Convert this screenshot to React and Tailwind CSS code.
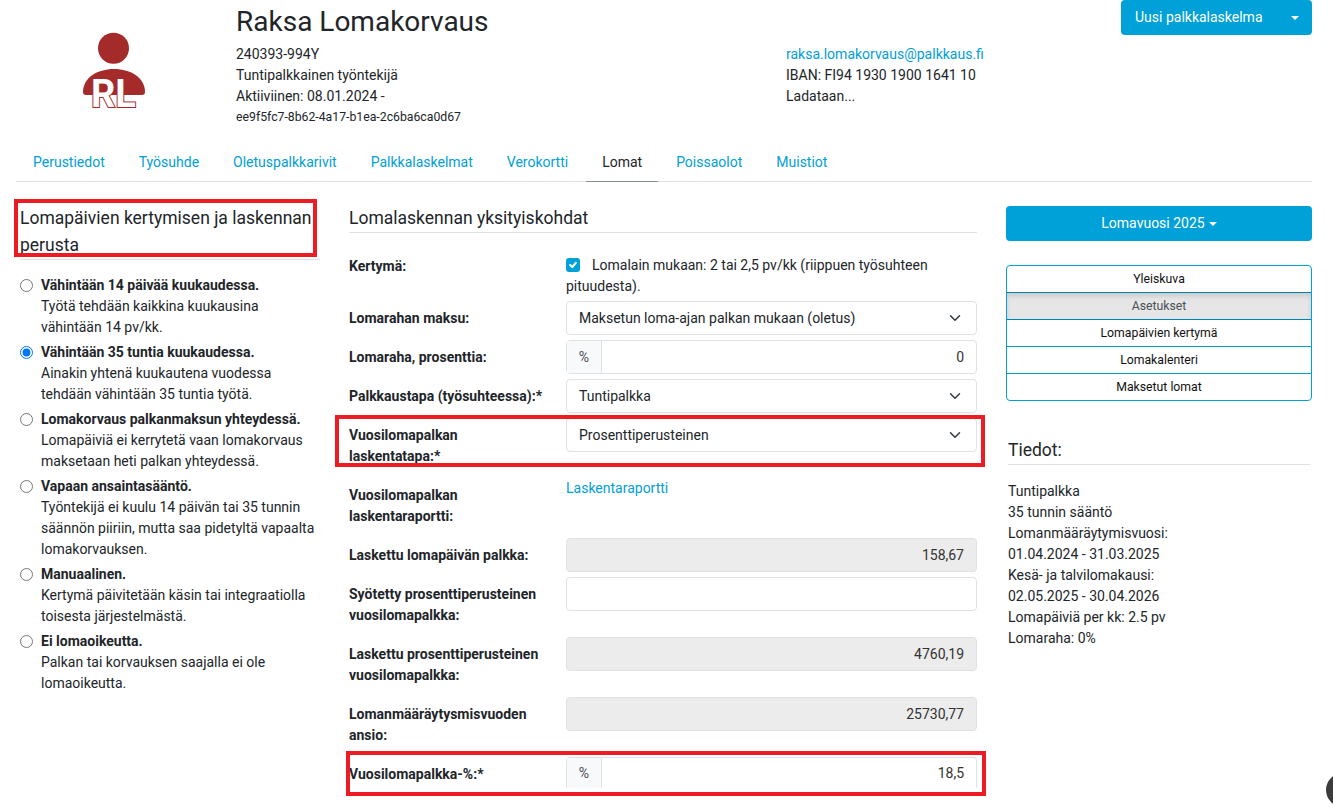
import React from "react";

const tabs = ["Perustiedot", "Työsuhde", "Oletuspalkkarivit", "Palkkalaskelmat", "Verokortti", "Lomat", "Poissaolot", "Muistiot"];

const options = [
  { t: "Vähintään 14 päivää kuukaudessa.", d: ["Työtä tehdään kaikkina kuukausina", "vähintään 14 pv/kk."] },
  { t: "Vähintään 35 tuntia kuukaudessa.", d: ["Ainakin yhtenä kuukautena vuodessa", "tehdään vähintään 35 tuntia työtä."], on: true },
  { t: "Lomakorvaus palkanmaksun yhteydessä.", d: ["Lomapäiviä ei kerrytetä vaan lomakorvaus", "maksetaan heti palkan yhteydessä."] },
  { t: "Vapaan ansaintasääntö.", d: ["Työntekijä ei kuulu 14 päivän tai 35 tunnin", "säännön piiriin, mutta saa pidetyltä vapaalta", "lomakorvauksen."] },
  { t: "Manuaalinen.", d: ["Kertymä päivitetään käsin tai integraatiolla", "toisesta järjestelmästä."] },
  { t: "Ei lomaoikeutta.", d: ["Palkan tai korvauksen saajalla ei ole", "lomaoikeutta."] },
];

const info = [
  "Tuntipalkka",
  "35 tunnin sääntö",
  "Lomanmääräytymisvuosi:",
  "01.04.2024 - 31.03.2025",
  "Kesä- ja talvilomakausi:",
  "02.05.2025 - 30.04.2026",
  "Lomapäiviä per kk: 2.5 pv",
  "Lomaraha: 0%",
];

function Caret() {
  return <span className="inline-block w-0 h-0 border-x-[4px] border-x-transparent border-t-[4px] border-t-white" />;
}

function Chevron() {
  return (
    <svg width="16" height="16" viewBox="0 0 16 16" fill="none" stroke="#343a40" strokeWidth="2" strokeLinecap="round" strokeLinejoin="round" className="w-[16px] h-[12px] shrink-0">
      <path d="M2 5l6 6 6-6" />
    </svg>
  );
}

function Row({ label, children, className = "" }) {
  return (
    <div className={`flex mb-[5px] ${className}`}>
      <div className="w-[217px] shrink-0 pt-[7px] pb-[6px] pr-4 font-bold">{label}</div>
      <div className="flex-1 min-w-0">{children}</div>
    </div>
  );
}

function Select({ value }) {
  return (
    <div className="h-[34px] flex items-center justify-between pl-[12px] pr-[13px] border border-[#dee2e6] rounded bg-white">
      <span>{value}</span>
      <Chevron />
    </div>
  );
}

function Percent({ value, cut }) {
  return (
    <div className={`flex border border-[#dee2e6] rounded bg-white ${cut ? "h-[31px] border-b-0 rounded-b-none" : "h-[34px]"}`}>
      <div className="w-[35px] bg-[#f8f9fa] border-r border-[#dee2e6] flex items-center justify-center text-[#495057]">%</div>
      <div className="flex-1 flex items-center justify-end pr-[12px] text-[#333333]">{value}</div>
    </div>
  );
}

function Disabled({ value }) {
  return (
    <div className="h-[34px] flex items-center justify-end pr-[12px] border border-[#dee2e6] rounded bg-[#ececec] text-[#333333]">{value}</div>
  );
}

export default function App() {
  return (
    <div className="relative h-[809px] overflow-hidden bg-white text-[#212529] text-[14px] leading-[21px] font-[Roboto,sans-serif]">
      {/* header */}
      <div className="flex h-[143px]">
        <svg width="236" height="143" viewBox="0 0 236 143" className="shrink-0 w-[236px] h-[143px]">
          <circle cx="113.5" cy="48.3" r="15.5" fill="#a52a2a" />
          <path d="M83 92C83 78 97 69 114 69C131 69 145 78 145 92Q145 95 142 95H86Q83 95 83 92Z" fill="#a52a2a" />
          <text x="91" y="106.5" fontFamily="Roboto, sans-serif" fontWeight="700" fontSize="38" fill="#ffffff" stroke="#a52a2a" strokeWidth="2" paintOrder="stroke">RL</text>
        </svg>
        <div className="w-[550px] shrink-0">
          <h1 className="text-[28px] leading-[34px] h-[44px] pt-[5px]">Raksa Lomakorvaus</h1>
          <div>240393-994Y</div>
          <div>Tuntipalkkainen työntekijä</div>
          <div>Aktiiviinen: 08.01.2024 -</div>
          <div className="text-[12.25px]">ee9f5fc7-8b62-4a17-b1ea-2c6ba6ca0d67</div>
        </div>
        <div className="flex-1 pt-[44px]">
          <div className="text-[#00a0d8]">raksa.lomakorvaus@palkkaus.fi</div>
          <div>IBAN: FI94 1930 1900 1641 10</div>
          <div>Ladataan...</div>
        </div>
        <div className="w-[191px] h-[35px] mr-[21px] flex items-center justify-between bg-[#00a0d8] text-white rounded pl-[14px] pr-[13px]">
          <span>Uusi palkkalaskelma</span>
          <Caret />
        </div>
      </div>

      {/* tabs */}
      <div className="flex ml-[16px] mr-[21px] border-b border-[#dee2e6] h-[39px]">
        {tabs.map((t) => (
          <div
            key={t}
            className={`h-[39px] mx-px px-[16px] pt-[9px] ${t === "Lomat" ? "text-[#212529] border-b border-[#868e96]" : "text-[#00a0d8]"}`}
          >
            {t}
          </div>
        ))}
      </div>

      {/* body */}
      <div className="flex pl-[20px] pr-[21px] pt-[23px] gap-[29px]">
        {/* left */}
        <div className="w-[300px] shrink-0">
          <h2 className="text-[17.5px] leading-[27px] border-b border-[#dee2e6] h-[54px] box-content">Lomapäivien kertymisen ja laskennan perusta</h2>
          <div className="pt-[15px] flex flex-col gap-[4px]">
            {options.map((o) => (
              <div key={o.t} className="flex">
                <div className="w-[21px] shrink-0 h-[21px] flex items-center">
                  <input type="radio" name="basis" defaultChecked={!!o.on} className="w-[13px] h-[13px] m-0" />
                </div>
                <div className="whitespace-nowrap">
                  <div className="font-bold">{o.t}</div>
                  {o.d.map((l) => (
                    <div key={l}>{l}</div>
                  ))}
                </div>
              </div>
            ))}
          </div>
        </div>

        {/* middle */}
        <div className="w-[628px] shrink-0">
          <h2 className="text-[17.5px] leading-[27px] border-b border-[#dee2e6] h-[28px] mb-[15px]">Lomalaskennan yksityiskohdat</h2>

          <div className="flex h-[48px] mb-[5px]">
            <div className="w-[217px] shrink-0 pt-[8px] font-bold">Kertymä:</div>
            <div className="flex-1 pt-[7px]">
              <span className="inline-flex align-[-2px] w-[14px] h-[14px] rounded-[3px] bg-[#00a0d8] items-center justify-center mr-[12px]">
                <svg viewBox="0 0 20 20" width="14" height="14" fill="none" stroke="#ffffff" strokeWidth="3" strokeLinecap="round" strokeLinejoin="round">
                  <path d="M6 10l3 3 5-6" />
                </svg>
              </span>
              Lomalain mukaan: 2 tai 2,5 pv/kk (riippuen työsuhteen pituudesta).
            </div>
          </div>

          <Row label="Lomarahan maksu:"><Select value="Maksetun loma-ajan palkan mukaan (oletus)" /></Row>
          <Row label="Lomaraha, prosenttia:"><Percent value="0" /></Row>
          <Row label="Palkkaustapa (työsuhteessa):*"><Select value="Tuntipalkka" /></Row>
          <Row label="Vuosilomapalkan laskentatapa:*"><Select value="Prosenttiperusteinen" /></Row>
          <Row label="Vuosilomapalkan laskentaraportti:">
            <div className="text-[#00a0d8]">Laskentaraportti</div>
          </Row>
          <Row label="Laskettu lomapäivän palkka:"><Disabled value="158,67" /></Row>
          <Row label="Syötetty prosenttiperusteinen vuosilomapalkka:">
            <div className="h-[34px] border border-[#dee2e6] rounded bg-white" />
          </Row>
          <Row label="Laskettu prosenttiperusteinen vuosilomapalkka:"><Disabled value="4760,19" /></Row>
          <Row label="Lomanmääräytysmisvuoden ansio:"><Disabled value="25730,77" /></Row>
          <Row label="Vuosilomapalkka-%:*"><Percent value="18,5" cut /></Row>
        </div>

        {/* right */}
        <div className="w-[306px] shrink-0 pt-px">
          <div className="h-[35px] flex items-center justify-center gap-[4px] bg-[#00a0d8] text-white rounded">
            <span>Lomavuosi 2025</span>
            <Caret />
          </div>

          <div className="mt-[24px] border border-[#00a0d8] rounded text-[12.25px] leading-[18px] text-center overflow-hidden">
            <div className="h-[26px] flex items-center justify-center text-[#111111]">Yleiskuva</div>
            <div className="h-[28px] flex items-center justify-center border-y border-[#0085b3] bg-[#e6e6e6] text-[#495057] shadow-[inset_0_3px_5px_rgba(0,0,0,0.125)]">Asetukset</div>
            <div className="h-[26px] flex items-center justify-center text-[#111111]">Lomapäivien kertymä</div>
            <div className="h-[27px] flex items-center justify-center border-t border-[#00a0d8] text-[#111111]">Lomakalenteri</div>
            <div className="h-[27px] flex items-center justify-center border-t border-[#00a0d8] text-[#111111]">Maksetut lomat</div>
          </div>

          <div className="mt-[36px] mx-[2px]">
            <h2 className="text-[17.5px] leading-[27px] border-b border-[#dee2e6] h-[28px] mb-[16px]">Tiedot:</h2>
            {info.map((l) => (
              <div key={l}>{l}</div>
            ))}
          </div>
        </div>
      </div>

      {/* annotations laid over the screenshot */}
      <div className="absolute left-[14px] top-[199px] w-[303px] h-[58px] border-[4px] border-[#ed1c24]" />
      <div className="absolute left-[335px] top-[415px] w-[650px] h-[52px] border-[4px] border-[#ed1c24]" />
      <div className="absolute left-[346px] top-[751px] w-[640px] h-[45px] border-[4px] border-[#ed1c24]" />

      {/* chat bubble */}
      <div className="absolute left-[1326px] top-[773px] w-[34px] h-[34px] rounded-full bg-[#3c3c3c]" />
    </div>
  );
}
